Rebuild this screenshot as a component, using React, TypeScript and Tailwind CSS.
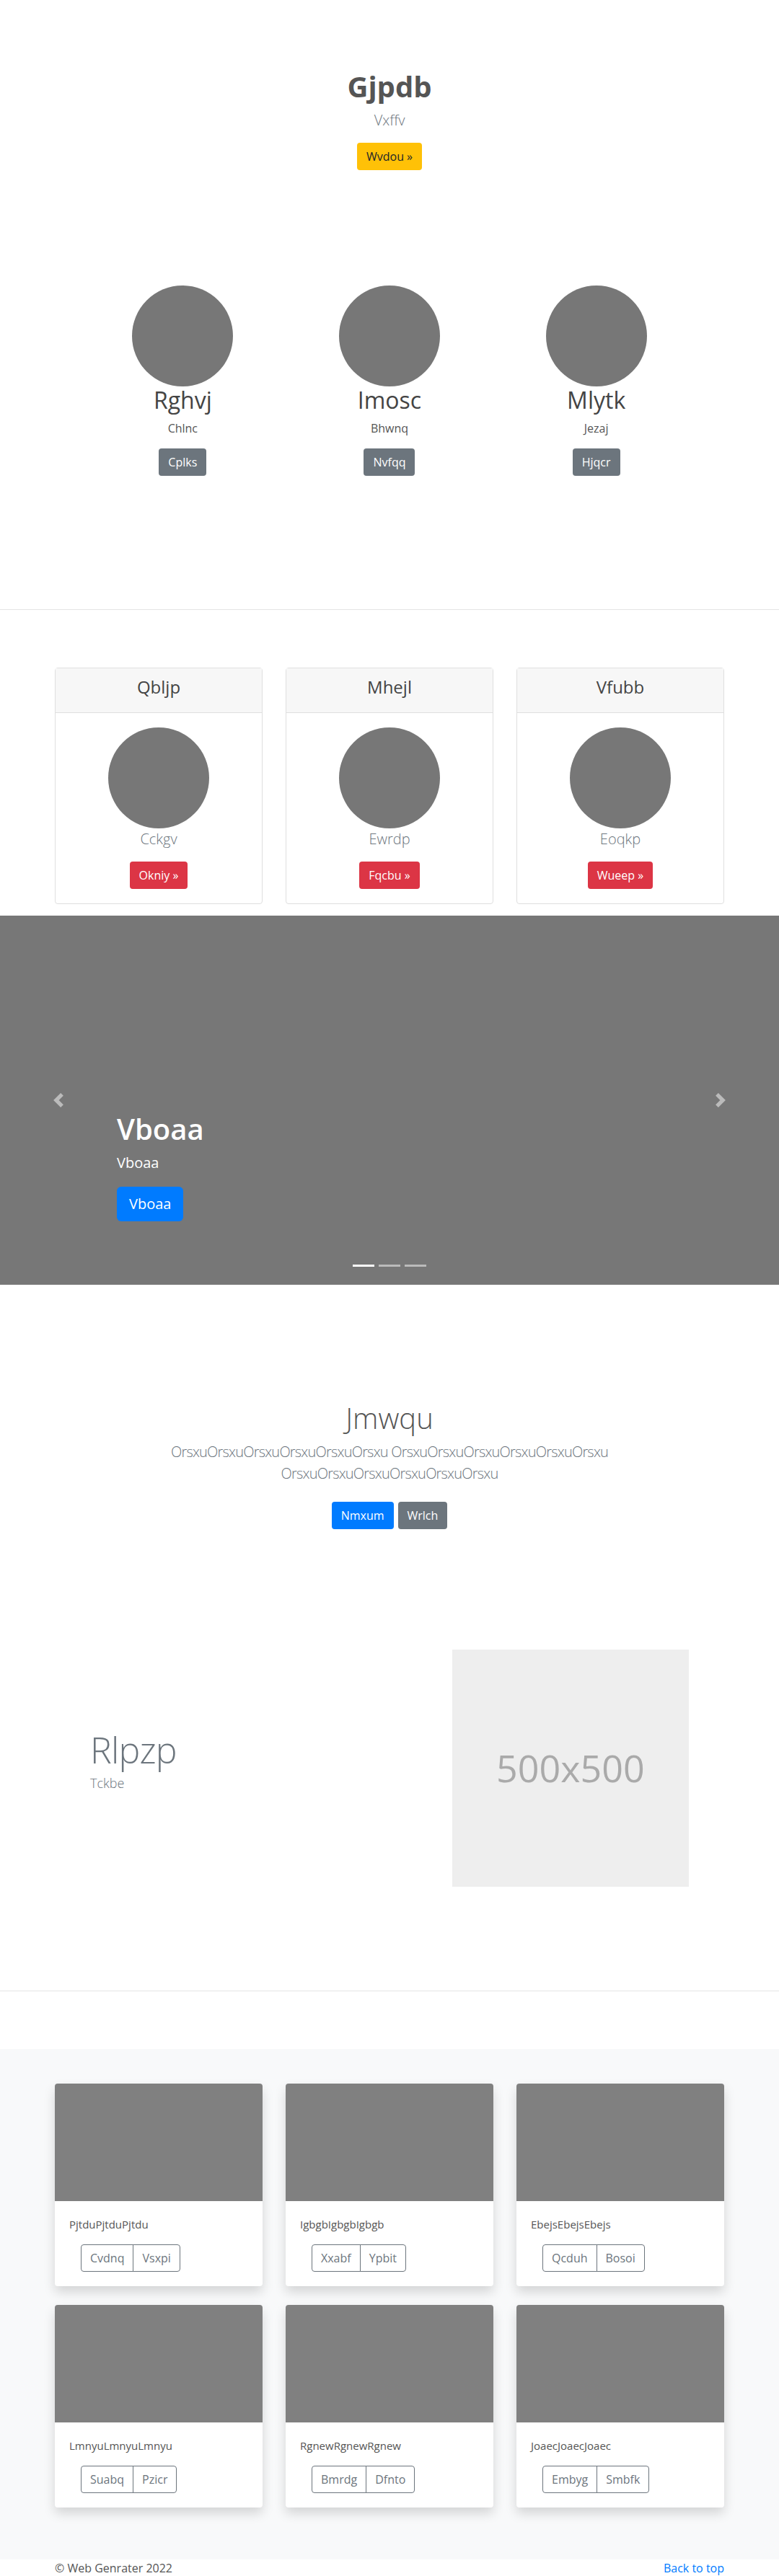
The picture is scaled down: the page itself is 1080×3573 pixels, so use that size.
const team = [
  { name: "Rghvj", sub: "Chlnc", btn: "Cplks" },
  { name: "Imosc", sub: "Bhwnq", btn: "Nvfqq" },
  { name: "Mlytk", sub: "Jezaj", btn: "Hjqcr" },
]

const plans = [
  { title: "Qbljp", sub: "Cckgv", btn: "Okniy »" },
  { title: "Mhejl", sub: "Ewrdp", btn: "Fqcbu »" },
  { title: "Vfubb", sub: "Eoqkp", btn: "Wueep »" },
]

const albums = [
  { text: "PjtduPjtduPjtdu", a: "Cvdnq", b: "Vsxpi" },
  { text: "IgbgbIgbgbIgbgb", a: "Xxabf", b: "Ypbit" },
  { text: "EbejsEbejsEbejs", a: "Qcduh", b: "Bosoi" },
  { text: "LmnyuLmnyuLmnyu", a: "Suabq", b: "Pzicr" },
  { text: "RgnewRgnewRgnew", a: "Bmrdg", b: "Dfnto" },
  { text: "JoaecJoaecJoaec", a: "Embyg", b: "Smbfk" },
]

const btn = "inline-block px-3 py-[6px] text-base leading-6 rounded-[4px] border border-transparent"

const Hero = () => {
  return (
    <section className="pt-[96px] text-center">
      <h1 className="text-[40px] leading-[48px] font-bold text-[#555] mb-2">Gjpdb</h1>
      <p className="text-[20px] leading-[30px] font-light text-[#6c757d] mb-4">Vxffv</p>
      <a className={`${btn} bg-[#ffc107] text-[#212529]`}>Wvdou »</a>
    </section>
  )
}

const Team = () => {
  return (
    <section className="mt-[160px] mb-[185px]">
      <div className="w-[860px] mx-auto grid grid-cols-3">
        {team.map((t) => (
          <div key={t.name} className="flex flex-col items-center text-center">
            <div className="size-[140px] rounded-full bg-[#777]" />
            <h2 className="text-[32px] leading-[38.4px] text-[#444] mb-2">{t.name}</h2>
            <p className="text-base leading-6 text-[#555] mb-4">{t.sub}</p>
            <a className={`${btn} bg-[#6c757d] text-white`}>{t.btn}</a>
          </div>
        ))}
      </div>
    </section>
  )
}

const Pricing = () => {
  return (
    <section className="pt-[80px]">
      <div className="w-[928px] mx-auto grid grid-cols-3 gap-8">
        {plans.map((p) => (
          <div key={p.title} className="border border-[#dfdfdf] rounded-[4px] text-center">
            <div className="bg-[#f7f7f7] border-b border-[#dfdfdf] px-5 pt-3 pb-5">
              <h4 className="text-[24px] leading-[28.8px] font-medium text-[#444]">{p.title}</h4>
            </div>
            <div className="p-5 flex flex-col items-center">
              <div className="size-[140px] rounded-full bg-[#777]" />
              <p className="text-[20px] leading-[30px] font-light text-[#6c757d] mb-4">{p.sub}</p>
              <a className={`${btn} bg-[#dc3545] text-white`}>{p.btn}</a>
            </div>
          </div>
        ))}
      </div>
    </section>
  )
}

const Chevron = ({ dir }: { dir: "prev" | "next" }) => {
  return (
    <svg viewBox="0 0 8 8" className="size-5 fill-white opacity-50">
      {dir === "prev"
        ? <path d="M5.25 0l-4 4 4 4 1.5-1.5L4.25 4l2.5-2.5L5.25 0z" />
        : <path d="M2.75 0l-1.5 1.5L3.75 4l-2.5 2.5L2.75 8l4-4-4-4z" />}
    </svg>
  )
}

const Carousel = () => {
  return (
    <section className="relative mt-4 h-[512px] bg-[#777] text-white">
      <div className="h-full flex flex-col justify-end pl-[162px] pb-[88px]">
        <h1 className="text-[40px] leading-[48px] font-semibold mb-2">Vboaa</h1>
        <p className="text-[20px] leading-[30px] mb-[18px]">Vboaa</p>
        <div>
          <a className="inline-block px-4 py-2 text-[20px] leading-[30px] rounded-[6px] border border-transparent bg-[#007bff] text-white">Vboaa</a>
        </div>
      </div>
      <div className="absolute left-[71px] top-[246px]"><Chevron dir="prev" /></div>
      <div className="absolute right-[71px] top-[246px]"><Chevron dir="next" /></div>
      <div className="absolute bottom-[25px] left-1/2 -translate-x-1/2 flex gap-[6px]">
        <span className="w-[30px] h-[3px] bg-white" />
        <span className="w-[30px] h-[3px] bg-white/50" />
        <span className="w-[30px] h-[3px] bg-white/50" />
      </div>
    </section>
  )
}

const Intro = () => {
  return (
    <section className="pt-[161px] text-center">
      <h1 className="text-[40px] leading-[48px] font-light text-[#555] mb-2">Jmwqu</h1>
      <p className="max-w-[700px] mx-auto text-[20px] leading-[30px] font-light tracking-[-0.8px] text-[#6c757d]">
        OrsxuOrsxuOrsxuOrsxuOrsxuOrsxu OrsxuOrsxuOrsxuOrsxuOrsxuOrsxu OrsxuOrsxuOrsxuOrsxuOrsxuOrsxu
      </p>
      <div className="pt-6 flex justify-center gap-[6px]">
        <a className={`${btn} bg-[#007bff] text-white`}>Nmxum</a>
        <a className={`${btn} bg-[#6c757d] text-white`}>Wrlch</a>
      </div>
    </section>
  )
}

const Featurette = () => {
  return (
    <section className="mt-[167px]">
      <div className="w-[860px] mx-auto grid grid-cols-12 items-center">
        <div className="col-span-7 px-[15px]">
          <h2 className="text-[50px] leading-[50px] font-light tracking-[-0.8px] text-[#6c757d] mb-2">Rlpzp</h2>
          <p className="text-[18px] leading-[27px] font-light text-[#6c757d] mb-4">Tckbe</p>
        </div>
        <div className="col-span-5 px-[15px]">
          <div className="aspect-square bg-[#eee] flex items-center justify-center text-[52px] text-[#aaa]">500x500</div>
        </div>
      </div>
    </section>
  )
}

const Album = () => {
  return (
    <section className="mt-[80px] bg-[#f8f9fa] pt-12 pb-[72px]">
      <div className="w-[928px] mx-auto grid grid-cols-3 gap-x-8 gap-y-[26px]">
        {albums.map((a) => (
          <div key={a.text} className="bg-white rounded-[4px] overflow-hidden shadow-[0_8px_16px_rgba(0,0,0,0.15)]">
            <div className="h-[163px] bg-[#808080]" />
            <div className="p-5">
              <p className="text-[15px] leading-6 text-[#555] mb-4">{a.text}</p>
              <div className="ml-4 inline-flex">
                <a className="px-3 py-[6px] text-base leading-6 text-[#6c757d] border border-[#6c757d] rounded-l-[4px]">{a.a}</a>
                <a className="-ml-px px-3 py-[6px] text-base leading-6 text-[#6c757d] border border-[#6c757d] rounded-r-[4px]">{a.b}</a>
              </div>
            </div>
          </div>
        ))}
      </div>
    </section>
  )
}

const Footer = () => {
  return (
    <footer className="w-[928px] mx-auto flex justify-between text-base leading-6">
      <span className="text-[#555]">© Web Genrater 2022</span>
      <a className="text-[#007bff]">Back to top</a>
    </footer>
  )
}

const App = () => {
  return (
    <div className="bg-white font-['Open_Sans',sans-serif] text-[#212529]">
      <Hero />
      <Team />
      <hr className="border-[#e5e5e5]" />
      <Pricing />
      <Carousel />
      <Intro />
      <Featurette />
      <hr className="mt-[144px] border-[#e5e5e5]" />
      <Album />
      <Footer />
    </div>
  )
}

export default App
